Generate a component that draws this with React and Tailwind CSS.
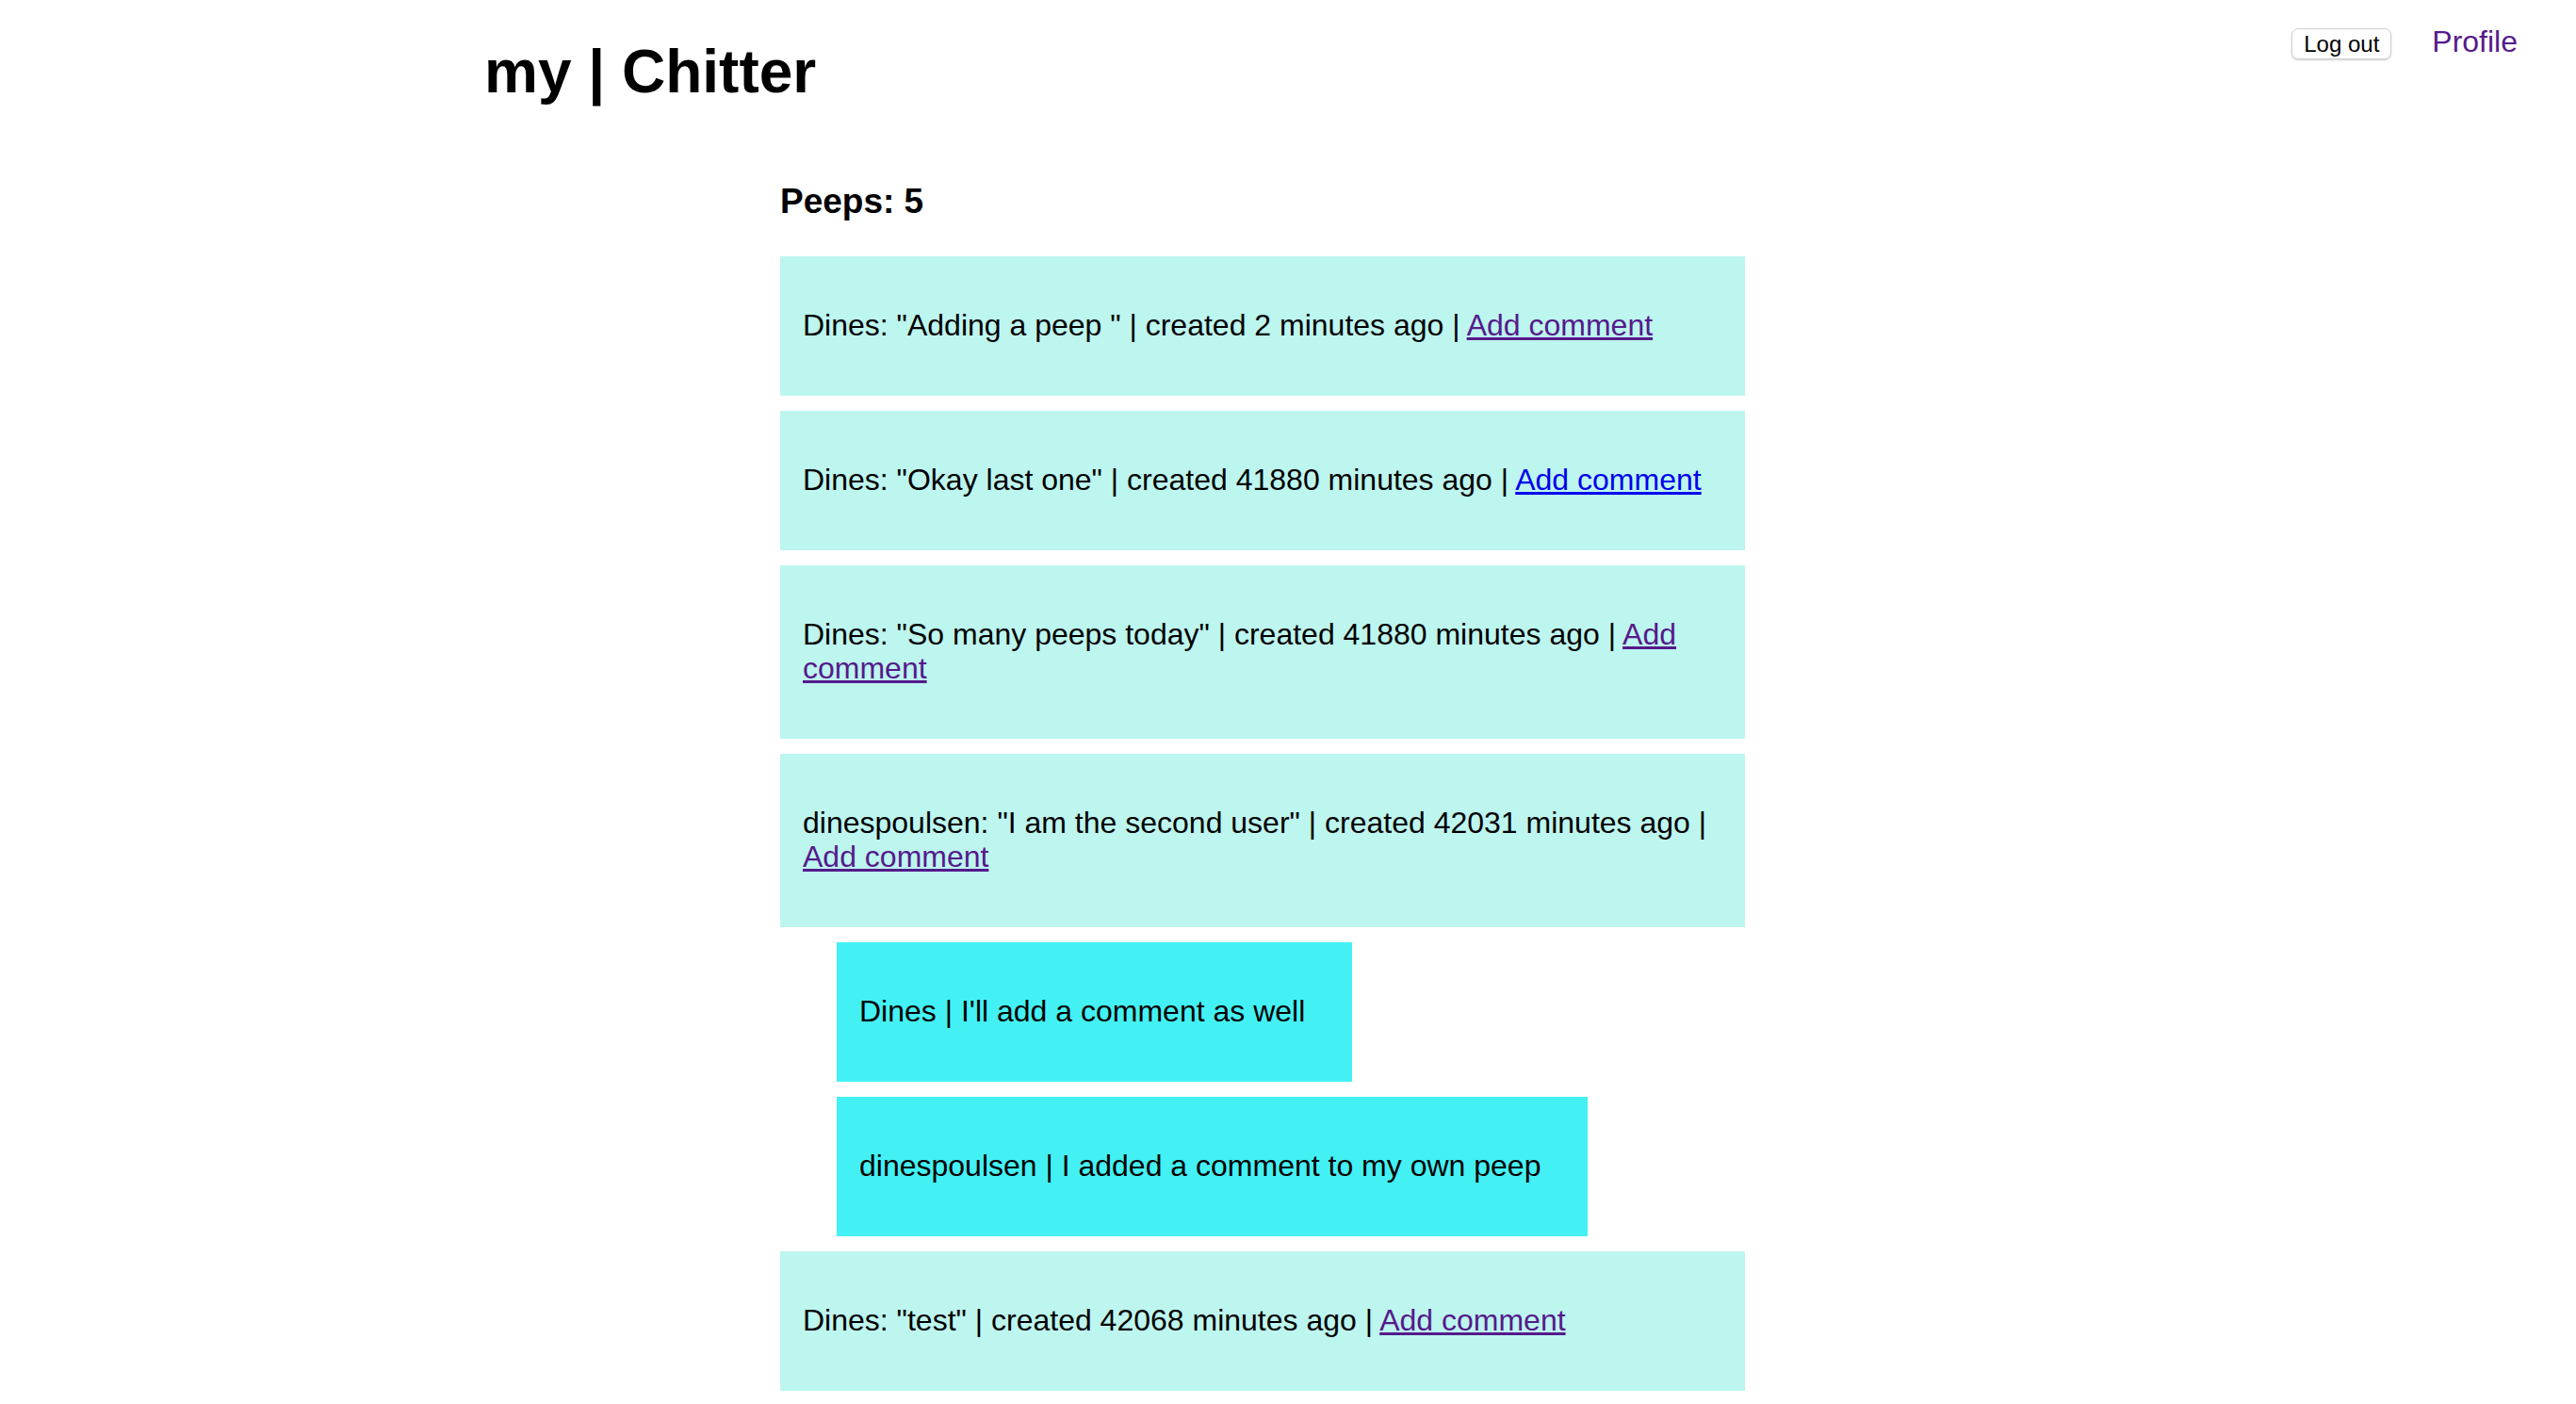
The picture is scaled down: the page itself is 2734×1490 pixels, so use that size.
import React from 'react';

const peeps = [
  { id: 1, user: 'Dines', body: 'Adding a peep ', ago: '2 minutes ago', visited: true, comments: [] },
  { id: 2, user: 'Dines', body: 'Okay last one', ago: '41880 minutes ago', visited: false, comments: [] },
  { id: 3, user: 'Dines', body: 'So many peeps today', ago: '41880 minutes ago', visited: true, comments: [] },
  {
    id: 4,
    user: 'dinespoulsen',
    body: 'I am the second user',
    ago: '42031 minutes ago',
    visited: true,
    comments: [
      { id: 1, user: 'Dines', body: "I'll add a comment as well" },
      { id: 2, user: 'dinespoulsen', body: 'I added a comment to my own peep' },
    ],
  },
  { id: 5, user: 'Dines', body: 'test', ago: '42068 minutes ago', visited: true, comments: [] },
];

export default function App() {
  return (
    <div className="min-h-screen bg-white text-black font-['Liberation_Sans',Arial,Helvetica,sans-serif]">
      <header className="flex items-start justify-between">
        <h1 className="ml-[514px] mt-[39px] text-[64px] font-bold leading-[74px]">my | Chitter</h1>
        <nav className="mr-[62px] mt-[26px] flex items-start gap-[43px]">
          <button className="mt-[4px] h-[33px] rounded-[7px] border border-[#d2d2d2] bg-white px-[12px] text-[24px] leading-none shadow-[0_1px_2px_rgba(0,0,0,0.18)]">
            Log out
          </button>
          <a href="#" className="text-[32px] leading-[37px] text-[#551a8b]">Profile</a>
        </nav>
      </header>

      <main className="ml-[828px] w-[1024px]">
        <h3 className="mt-[79px] text-[37px] font-bold leading-[43px]">Peeps: 5</h3>
        <ul className="mt-[37px] flex flex-col gap-4">
          {peeps.map(p => (
            <React.Fragment key={p.id}>
              <li className="bg-[#bdf5ef] px-[24px] pt-[55px] pb-[57px] text-[32px] leading-[36px]">
                {p.user}: "{p.body}" | created {p.ago} |{' '}
                <a href="#" className={`underline ${p.visited ? 'text-[#551a8b]' : 'text-[#0000ee]'}`}>Add comment</a>
              </li>
              {p.comments.map(c => (
                <li key={`c${c.id}`} className="ml-[60px] w-fit bg-[#43f1f4] pl-[24px] pr-[50px] pt-[55px] pb-[57px] text-[32px] leading-[36px]">
                  {c.user} | {c.body}
                </li>
              ))}
            </React.Fragment>
          ))}
        </ul>
      </main>
    </div>
  );
}
